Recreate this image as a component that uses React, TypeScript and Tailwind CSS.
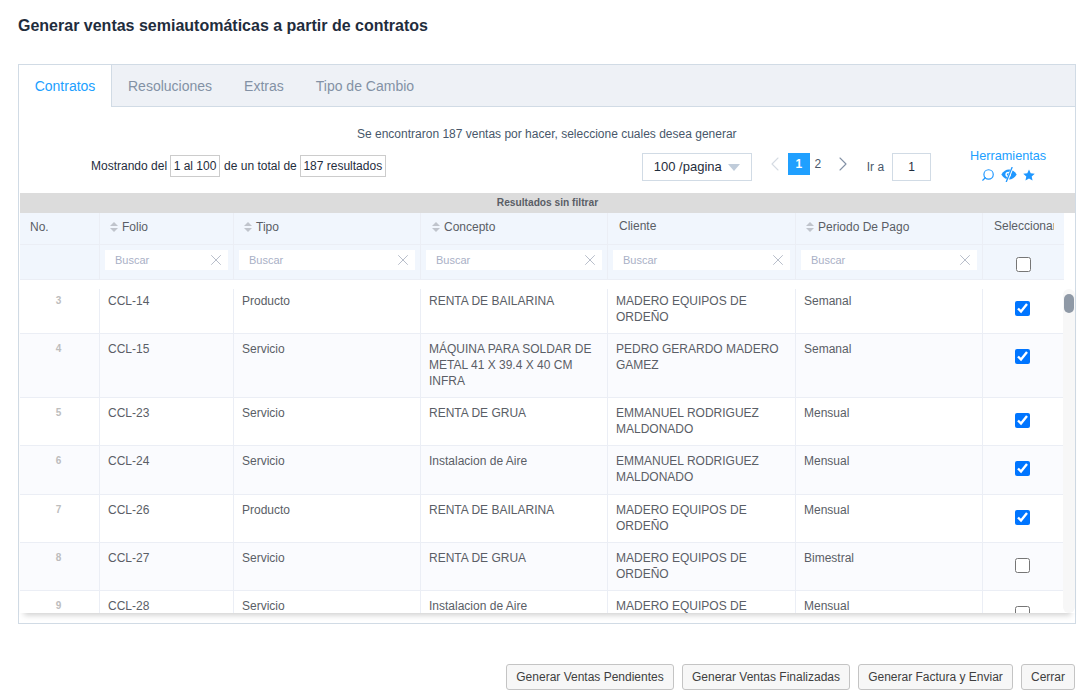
import { ChevronLeft, ChevronRight, Search, X } from "lucide-react";

const rows = [
  { no: 3, folio: "CCL-14", tipo: "Producto", concepto: "RENTA DE BAILARINA", cliente: "MADERO EQUIPOS DE ORDEÑO", periodo: "Semanal", checked: true, h: "h-[45px]" },
  { no: 4, folio: "CCL-15", tipo: "Servicio", concepto: "MÁQUINA PARA SOLDAR DE METAL 41 X 39.4 X 40 CM INFRA", cliente: "PEDRO GERARDO MADERO GAMEZ", periodo: "Semanal", checked: true, h: "h-[64px]" },
  { no: 5, folio: "CCL-23", tipo: "Servicio", concepto: "RENTA DE GRUA", cliente: "EMMANUEL RODRIGUEZ MALDONADO", periodo: "Mensual", checked: true, h: "h-[48px]" },
  { no: 6, folio: "CCL-24", tipo: "Servicio", concepto: "Instalacion de Aire", cliente: "EMMANUEL RODRIGUEZ MALDONADO", periodo: "Mensual", checked: true, h: "h-[49px]" },
  { no: 7, folio: "CCL-26", tipo: "Producto", concepto: "RENTA DE BAILARINA", cliente: "MADERO EQUIPOS DE ORDEÑO", periodo: "Mensual", checked: true, h: "h-[48px]" },
  { no: 8, folio: "CCL-27", tipo: "Servicio", concepto: "RENTA DE GRUA", cliente: "MADERO EQUIPOS DE ORDEÑO", periodo: "Bimestral", checked: false, h: "h-[48px]" },
  { no: 9, folio: "CCL-28", tipo: "Servicio", concepto: "Instalacion de Aire", cliente: "MADERO EQUIPOS DE ORDEÑO", periodo: "Mensual", checked: false, h: "h-[48px]" },
];

const SortCaret = () => (
  <svg width="8" height="10" viewBox="0 0 8 10" className="shrink-0">
    <path d="M4 0 L8 4 L0 4 Z M0 6 L8 6 L4 10 Z" fill="#c0c4cc" />
  </svg>
);

const EyeOff = () => (
  <svg width="16" height="15" viewBox="0 0 16 15" fill="none">
    <path d="M0.3 7.5 C2.5 4 5 2.5 8 2.5 C11 2.5 13.5 4 15.7 7.5 C13.5 11 11 12.5 8 12.5 C5 12.5 2.5 11 0.3 7.5 Z" fill="#1f97ff" />
    <circle cx="7.2" cy="7.5" r="2.8" fill="#fff" />
    <circle cx="7.2" cy="7.5" r="1.3" fill="#1f97ff" />
    <path d="M11.6 0 L5.6 15" stroke="#fff" strokeWidth="2.6" />
    <path d="M11.2 0 L5.2 15" stroke="#1f97ff" strokeWidth="1.3" />
  </svg>
);

const StarIcon = () => (
  <svg width="12" height="12" viewBox="0 0 24 24">
    <path d="M12 1 L15.4 8.6 L23.5 9.5 L17.4 15 L19.1 23 L12 18.9 L4.9 23 L6.6 15 L0.5 9.5 L8.6 8.6 Z" fill="#1f97ff" />
  </svg>
);

const HeadCell = ({ label, className }: { label: string; className: string }) => (
  <div className={`flex items-center gap-[4px] pb-[4px] border-r border-[#ebeef5] ${className}`}>
    <SortCaret />
    <span>{label}</span>
  </div>
);

const FilterCell = ({ className }: { className: string }) => (
  <div className={`flex items-center pl-[5px] pr-[5px] pb-[4px] border-r border-[#ebeef5] ${className}`}>
    <div className="flex h-[20px] w-full items-center justify-between bg-white pl-[10px] pr-[3px] text-[11px] text-[#a9b0c6]">
      <span>Buscar</span>
      <X size={18} strokeWidth={1} color="#a0a8b8" />
    </div>
  </div>
);

export default function App() {
  return (
    <div className="h-[700px] w-[1091px] overflow-hidden bg-white font-['Liberation_Sans',Arial,sans-serif] text-[12px] text-[#5a5e66]">
      <h1 className="pl-[18px] pt-[16px] text-[16px] leading-[20px] font-bold text-[#1f2d3d]">
        Generar ventas semiautomáticas a partir de contratos
      </h1>

      <div className="ml-[18px] mt-[28px] h-[560px] w-[1058px] border border-[#d1dbe5]">
        {/* tabs */}
        <div className="flex h-[42px] border-b border-[#d1dbe5] bg-[#eef1f6] text-[14px] text-[#8391a5]">
          <div className="-mb-px flex h-[42px] w-[93px] items-center justify-center border-r border-[#d1dbe5] bg-white text-[#20a0ff]">
            Contratos
          </div>
          <div className="flex items-center gap-[32px] pl-[16px] pt-[2px]">
            <span>Resoluciones</span>
            <span>Extras</span>
            <span>Tipo de Cambio</span>
          </div>
        </div>

        {/* toolbar */}
        <div className="h-[86px] text-[#48576a]">
          <p className="pl-[338px] pt-[20px] leading-[14px]">
            Se encontraron 187 ventas por hacer, seleccione cuales desea generar
          </p>
          <div className="flex">
            <div className="flex items-center pl-[72px] pt-[14px] self-start text-[#1f2d3d]">
              <span>Mostrando del</span>
              <span className="ml-[3px] flex h-[22px] w-[50px] items-center justify-center border border-[#cccccc]">1 al 100</span>
              <span className="ml-[4px]">de un total de</span>
              <span className="ml-[3px] flex h-[22px] w-[86px] items-center justify-center border border-[#cccccc]">187 resultados</span>
            </div>
            <div className="ml-[256px] mt-[12px] flex h-[28px] w-[110px] items-center justify-between border border-[#d1dbe5] pl-[11px] pr-[11px] text-[13px] whitespace-nowrap text-[#1f2d3d]">
              <span>100 /pagina</span>
              <svg width="12" height="7" viewBox="0 0 12 7"><path d="M0 0 H12 L6 7 Z" fill="#c0ccda" /></svg>
            </div>
            <div className="ml-[11px] mt-[12px] flex h-[22px] items-center text-[#48576a]">
              <ChevronLeft size={24} strokeWidth={1.1} color="#d5dbe3" />
              <span className="ml-[1px] flex h-[22px] w-[22px] items-center justify-center bg-[#20a0ff] font-bold text-white">1</span>
              <span className="w-[16px] text-center">2</span>
              <ChevronRight size={24} strokeWidth={1.1} color="#8391a5" className="ml-[5px]" />
            </div>
            <div className="ml-[12px] mt-[12px] flex h-[28px] items-center text-[#48576a]">
              <span>Ir a</span>
              <span className="ml-[8px] flex h-[28px] w-[39px] items-center justify-center border border-[#d1dbe5] text-[#1f2d3d]">1</span>
            </div>
            <div className="ml-[39px] mt-[7px] flex w-[76px] flex-col items-center text-[12.7px] whitespace-nowrap text-[#20a0ff]">
              <span className="leading-[16px]">Herramientas</span>
              <div className="mt-[3px] flex items-center gap-[6px]">
                <Search size={14} strokeWidth={2} color="#1f97ff" className="-scale-x-100" />
                <EyeOff />
                <StarIcon />
              </div>
            </div>
          </div>
        </div>

        <div className="ml-[1px] flex h-[20px] items-center justify-center bg-[#dcdcdc] text-[10.2px] font-bold text-[#5a5e66]">
          Resultados sin filtrar
        </div>

        {/* table */}
        <div className="ml-[1px] w-[1044px] bg-[#f1f6fd]">
          <div className="flex h-[32px] border-b border-[#ebeef5]">
            <div className="flex w-[80px] items-center border-r border-[#ebeef5] pb-[4px] pl-[10px]">No.</div>
            <HeadCell label="Folio" className="w-[134px] pl-[10px]" />
            <HeadCell label="Tipo" className="w-[187px] pl-[10px]" />
            <HeadCell label="Concepto" className="w-[187px] pl-[11px]" />
            <div className="flex w-[188px] items-center border-r border-[#ebeef5] pb-[6px] pl-[11px]">Cliente</div>
            <HeadCell label="Periodo De Pago" className="w-[187px] pl-[10px]" />
            <div className="flex w-[81px] items-center pb-[6px] pl-[11px]">
              <span className="w-[60px] overflow-hidden whitespace-nowrap">Seleccionar</span>
            </div>
          </div>
          <div className="flex h-[35px] border-b border-[#ebeef5]">
            <div className="w-[80px] border-r border-[#ebeef5]" />
            <FilterCell className="w-[134px]" />
            <FilterCell className="w-[187px]" />
            <FilterCell className="w-[187px]" />
            <FilterCell className="w-[188px]" />
            <FilterCell className="w-[187px]" />
            <div className="flex w-[81px] items-center justify-center pt-[4px]">
              <input type="checkbox" readOnly className="h-[15px] w-[15px]" />
            </div>
          </div>
        </div>

        {/* body */}
        <div className="ml-[1px] flex h-[333px] bg-white shadow-[0_6px_6px_-4px_rgba(0,0,0,0.2)]">
          <div className="h-[333px] w-[1044px] overflow-hidden pt-[9px]">
            {rows.map((r, i) => (
              <div key={r.no} className={`flex overflow-hidden border-b border-[#ebeef5] leading-[16px] ${r.h} ${i % 2 === 1 ? "bg-[#fafbfe]" : "bg-white"}`}>
                <div className={`w-[80px] shrink-0 border-r border-[#ebeef5] pr-[2px] text-center text-[10px] font-bold text-[#bdbdbd] ${i === 0 ? "pt-[4px]" : "pt-[7px]"}`}>{r.no}</div>
                <div className={`w-[134px] shrink-0 border-r border-[#ebeef5] pl-[8px] ${i === 0 ? "pt-[4px]" : "pt-[7px]"}`}>{r.folio}</div>
                <div className={`w-[187px] shrink-0 border-r border-[#ebeef5] pl-[8px] ${i === 0 ? "pt-[4px]" : "pt-[7px]"}`}>{r.tipo}</div>
                <div className={`w-[187px] shrink-0 border-r border-[#ebeef5] pl-[8px] pr-[10px] ${i === 0 ? "pt-[4px]" : "pt-[7px]"}`}>{r.concepto}</div>
                <div className={`w-[188px] shrink-0 border-r border-[#ebeef5] pl-[8px] pr-[10px] ${i === 0 ? "pt-[4px]" : "pt-[7px]"}`}>{r.cliente}</div>
                <div className={`w-[187px] shrink-0 border-r border-[#ebeef5] pl-[8px] ${i === 0 ? "pt-[4px]" : "pt-[7px]"}`}>{r.periodo}</div>
                <div className={`flex w-[81px] shrink-0 justify-center pr-[2px] ${i === 0 ? "pt-[12px]" : "pt-[14.5px]"}`}>
                  <input type="checkbox" readOnly checked={r.checked} className="h-[15px] w-[15px]" />
                </div>
              </div>
            ))}
          </div>
          {/* scrollbar */}
          <div className="mt-[9px] w-[12px] rounded-[6px] bg-[#f7f7f7] pt-[5px] pl-[1px]">
            <div className="h-[19px] w-[10px] rounded-[5px] bg-[#8f99a6]" />
          </div>
        </div>
      </div>

      <div className="mr-[16px] mt-[40px] flex justify-end gap-[8px] text-[#3f3f3f]">
        <button className="h-[26px] w-[168px] rounded-[3px] border border-[#c4c4c4] bg-[#f7f7f7]">Generar Ventas Pendientes</button>
        <button className="h-[26px] w-[168px] rounded-[3px] border border-[#c4c4c4] bg-[#f7f7f7]">Generar Ventas Finalizadas</button>
        <button className="h-[26px] w-[155px] rounded-[3px] border border-[#c4c4c4] bg-[#f7f7f7]">Generar Factura y Enviar</button>
        <button className="h-[26px] w-[54px] rounded-[3px] border border-[#c4c4c4] bg-[#f7f7f7]">Cerrar</button>
      </div>
    </div>
  );
}
